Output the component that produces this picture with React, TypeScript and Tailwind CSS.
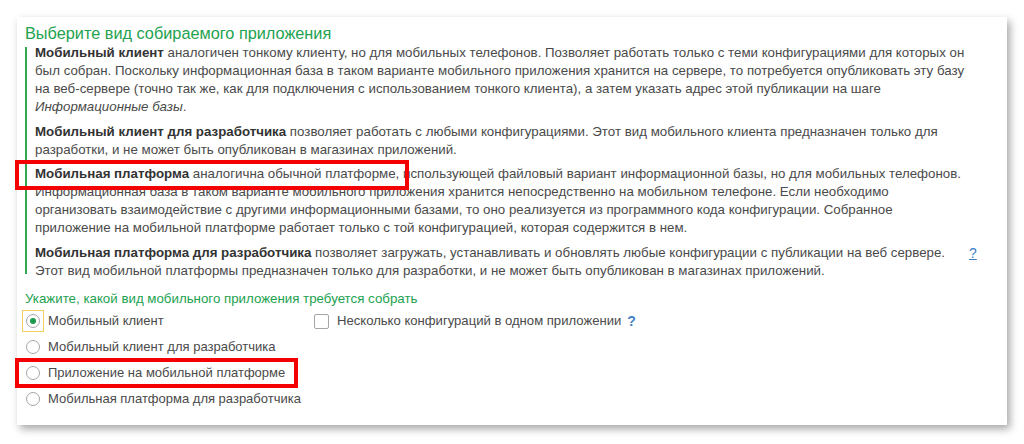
import React from "react";

function Radio({ checked, focused, label, marked }: { checked?: boolean; focused?: boolean; label: string; marked?: boolean }) {
  return (
    <div className="relative flex h-[26px] items-center">
      <div
        className={
          focused
            ? "flex h-[22px] w-[22px] items-center justify-center border border-[#f3cf63]"
            : "flex h-[22px] w-[22px] items-center justify-center"
        }
      >
        <span className="flex h-[14px] w-[14px] items-center justify-center rounded-full border border-[#a6a6a6] bg-white">
          {checked && <span className="h-[6px] w-[6px] rounded-full bg-[#1c9a4a]" />}
        </span>
      </div>
      <span className="ml-[4px] text-[13px] text-[#4a4a4a]">{label}</span>
      {marked && (
        <div className="pointer-events-none absolute left-[-7px] top-[-2px] h-[30px] w-[283px] border-[4px] border-[#f50000]" />
      )}
    </div>
  );
}

export default function App() {
  return (
    <div className="min-h-[444px] w-[1024px] bg-white p-[17px]" style={{ fontFamily: '"Liberation Sans", Arial, sans-serif' }}>
      <div className="h-[408px] w-[990px] bg-white pl-[8px] pt-[6px] shadow-[3px_4px_8px_rgba(0,0,0,0.35)]">
        <h1 className="h-[21px] text-[16.3px] leading-[20px] text-[#22a24f]">Выберите вид собираемого приложения</h1>

        {/* описания видов приложения с зелёной линией слева */}
        <div className="flex">
          <div className="mb-[6px] mt-[3px] w-[2px] bg-[#33a852]" />
          <div className="whitespace-nowrap pl-[8px] text-[13.3px] leading-[18px] text-[#4a4a4a]">
            <p className="mb-[7px]">
              <b className="text-[#333]">Мобильный клиент</b> аналогичен тонкому клиенту, но для мобильных телефонов. Позволяет работать только с теми конфигурациями для которых он
              <br />
              был собран. Поскольку информационная база в таком варианте мобильного приложения хранится на сервере, то потребуется опубликовать эту базу
              <br />
              на веб-сервере (точно так же, как для подключения с использованием тонкого клиента), а затем указать адрес этой публикации на шаге
              <br />
              <i>Информационные базы</i>.
            </p>
            <p className="mb-[6px]">
              <b className="text-[#333]">Мобильный клиент для разработчика</b> позволяет работать с любыми конфигурациями. Этот вид мобильного клиента предназначен только для
              <br />
              разработки, и не может быть опубликован в магазинах приложений.
            </p>
            <p className="relative mb-[7px]">
              <b className="text-[#333]">Мобильная платформа</b> аналогична обычной платформе, использующей файловый вариант информационной базы, но для мобильных телефонов.
              <br />
              Информационная база в таком варианте мобильного приложения хранится непосредственно на мобильном телефоне. Если необходимо
              <br />
              организовать взаимодействие с другими информационными базами, то оно реализуется из программного кода конфигурации. Собранное
              <br />
              приложение на мобильной платформе работает только с той конфигурацией, которая содержится в нем.
              <span className="pointer-events-none absolute left-[-20px] top-[-5px] h-[30px] w-[394px] border-[4px] border-[#f50000]" />
            </p>
            <div className="flex">
              <p className="w-[932px]">
                <b className="text-[#333]">Мобильная платформа для разработчика</b> позволяет загружать, устанавливать и обновлять любые конфигурации с публикации на веб сервере.
                <br />
                Этот вид мобильной платформы предназначен только для разработки, и не может быть опубликован в магазинах приложений.
              </p>
              <span className="ml-[2px] text-[14px] text-[#3f7fc4] underline">?</span>
            </div>
          </div>
        </div>

        <div className="mt-[10px] text-[13.3px] leading-[18px] text-[#22a24f]">Укажите, какой вид мобильного приложения требуется собрать</div>

        <div className="-ml-[3px] flex">
          <div className="w-[292px]">
            <Radio checked focused label="Мобильный клиент" />
            <Radio label="Мобильный клиент для разработчика" />
            <Radio label="Приложение на мобильной платформе" marked />
            <Radio label="Мобильная платформа для разработчика" />
          </div>
          <div className="flex h-[26px] items-center">
            <span className="h-[15px] w-[15px] rounded-[2px] border border-[#a6a6a6] bg-white" />
            <span className="ml-[8px] text-[13.1px] text-[#4a4a4a]">Несколько конфигураций в одном приложении</span>
            <span className="ml-[6px] text-[14px] font-bold text-[#3f7fc4]">?</span>
          </div>
        </div>
      </div>
    </div>
  );
}
